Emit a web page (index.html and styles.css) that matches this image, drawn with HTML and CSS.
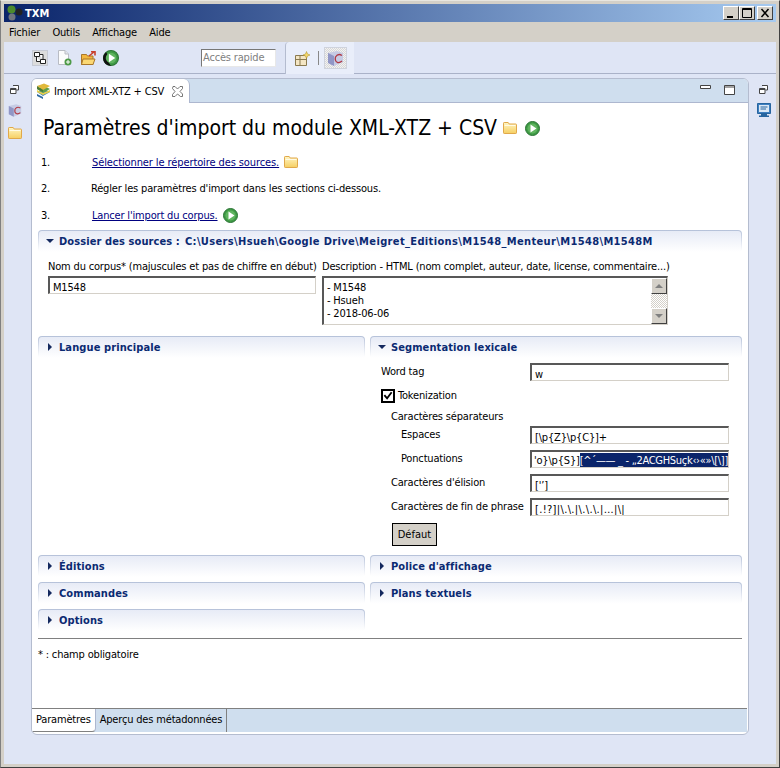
FILE: index.html
```html
<!DOCTYPE html>
<html lang="fr">
<head>
<meta charset="utf-8">
<title>TXM</title>
<link rel="stylesheet" href="styles.css">
</head>
<body>
<svg class="defs" width="0" height="0">
  <defs>
    <linearGradient id="fold" x1="0" y1="0" x2="0" y2="1"><stop offset="0" stop-color="#fff6c4"/><stop offset="1" stop-color="#f6cf62"/></linearGradient>
    <symbol id="folder" viewBox="0 0 14 12">
      <path d="M.5 2V1.2Q.5.5 1.2.5h4L6.200 2H12.800Q13.500 2 13.500 2.700V10.800Q13.500 11.500 12.800 11.500H1.200Q.5 11.500 .5 10.800Z" fill="url(#fold)" stroke="#e0a84a"/>
      <path d="M1.500 3.500H12.500" stroke="#fffbe6"/>
    </symbol>
    <symbol id="play" viewBox="0 0 15 15">
      <circle cx="7.500" cy="7.500" r="7" fill="#3f9a45" stroke="#2a7434"/>
      <circle cx="7.500" cy="7.500" r="5" fill="#5fb45f"/>
      <path d="M5.500 3.500L11.500 7.500L5.500 11.500Z" fill="#fff"/>
    </symbol>
    <symbol id="restore" viewBox="0 0 9 9">
      <path d="M3 .5H8.500V5H6.500M.5 3.500H6V8.500H.5Z M.5 4.500H6" fill="#fff" stroke="#444"/>
    </symbol>
    <symbol id="cube" viewBox="0 0 17 17">
      <path d="M1 3L10 1L16 3V12L7 16L1 13Z" fill="#c6cbe4"/>
      <path d="M1 3L7 6V16L1 13Z" fill="#9096c6"/>
      <path d="M15 5.500Q11 3 8.500 7Q7.500 11 10.500 12.500Q13 13 15 11" fill="none" stroke="#b03a45" stroke-width="1.300"/>
    </symbol>
  </defs>
</svg>
<div class="window">
  <header class="titlebar">
    <svg class="logo" width="17" height="16" viewBox="0 0 17 16"><circle cx="5.500" cy="4.500" r="4" fill="#4c8a2c"/><circle cx="13" cy="7" r="3.500" fill="#222"/><circle cx="6" cy="12" r="3.500" fill="#70757f"/></svg>
    <span class="title-text">TXM</span>
    <div class="win-buttons">
      <span class="win-btn"><svg width="14" height="12" viewBox="0 0 14 12"><path d="M3 9H9V11H3Z" fill="#000"/></svg></span>
      <span class="win-btn"><svg width="14" height="12" viewBox="0 0 14 12"><path d="M2.500 1.500H11.500V10.500H2.500Z M2.500 2.500H11.500" fill="none" stroke="#000"/></svg></span>
      <span class="win-btn win-close"><svg width="14" height="12" viewBox="0 0 14 12"><path d="M3.500 2L10.500 10M10.500 2L3.500 10" stroke="#000" stroke-width="1.500"/></svg></span>
    </div>
  </header>
  <nav class="menubar">
    <span>Fichier</span><span>Outils</span><span>Affichage</span><span>Aide</span>
  </nav>
  <div class="toolbar">
    <div class="tool-main">
      <span class="tool-pressed"><svg width="14" height="14" viewBox="0 0 14 14"><path d="M1.500 1.500H6.500V5.500H1.500ZM7.500 8.500H12.500V12.500H7.500ZM6.500 3.500H10V8.500M7.500 10.500H3.500V5.500" fill="#fff" stroke="#222"/></svg></span>
      <svg class="tool-new" width="15" height="16" viewBox="0 0 15 16"><path d="M1.500 .5H8L11.500 4V14.500H1.500Z" fill="#fcfcfc" stroke="#b9bcc4"/><path d="M8 .5V4H11.500" fill="#e4e6ec" stroke="#b9bcc4"/><circle cx="11" cy="12" r="3.500" fill="#4d9a47"/><path d="M11 10V14M9 12H13" stroke="#fff"/></svg>
      <svg class="tool-open" width="15" height="14" viewBox="0 0 15 14"><path d="M.5 3.500H5.500L6.500 5H12V13.500H.5Z" fill="#f3b73e" stroke="#a9772a"/><path d="M2 8H14L12 13.500H.5Z" fill="#fbd873" stroke="#a9772a"/><path d="M8 5L13 1M10 .8H14V4.500" fill="none" stroke="#c8402c" stroke-width="1.600"/></svg>
      <svg class="tool-run" width="16" height="16" viewBox="0 0 15 15"><use href="#play"/><path d="M3 2A7 7 0 0 0 4 14L7.500 15 5.500 12A5 5 0 0 1 4 4Z" fill="#111"/></svg>
      <div class="quick">Accès rapide</div>
    </div>
    <div class="persp">
      <svg width="15" height="15" viewBox="0 0 15 15"><path d="M.5 4.500H11.500V14.500H.5ZM.5 8.500H11.500M5 4.500V14.500" fill="#f4e6c4" stroke="#8a7a50"/><path d="M11.500 .5L12.500 3 15 4 12.500 5 11.500 7.500 10.500 5 8 4 10.500 3Z" fill="#f5d76a" stroke="#a88a20" stroke-width=".5"/></svg>
      <i class="persp-sep"></i>
      <span class="persp-on"><svg width="17" height="17"><use href="#cube"/></svg></span>
    </div>
  </div>
  <div class="workbench">
    <aside class="trim trim-left">
      <svg width="9" height="9"><use href="#restore"/></svg>
      <svg width="14" height="15"><use href="#cube"/></svg>
      <svg width="14" height="12"><use href="#folder"/></svg>
    </aside>
    <main class="editor">
      <div class="tabstrip">
        <div class="tab">
          <svg width="15" height="16" viewBox="0 0 15 16"><path d="M1 9L8 6L14 9L7 13Z" fill="#3a7fb8"/><path d="M1 11L7 14V16L1 13Z" fill="#2f6aa0"/><path d="M1 6L8 3L14 6L7 10Z" fill="#5fa04a"/><path d="M1 7V9L7 12L14 9V7L7 10Z" fill="#e8d04a"/><path d="M1 3L8 .5L14 3L7 7Z" fill="#e0b83a"/><path d="M1 3V6L7 9V7Z" fill="#4d7a34"/></svg>
          <span>Import XML-XTZ + CSV</span>
          <svg class="tab-close" width="11" height="11" viewBox="0 0 11 11"><path d="M1 .5H3L5.500 3 8 .5H10.500V2.500L8 5.500 10.500 8V10.500H8.500L5.500 8 3 10.500H.5V8.500L3 5.500 .5 2.500Z" fill="#fff" stroke="#555" stroke-width=".8"/></svg>
        </div>
        <div class="tab-ctrl">
          <svg width="11" height="5" viewBox="0 0 11 5"><path d="M.5 .5H10.500V3.500H.5Z" fill="#fff" stroke="#444"/></svg>
          <svg width="11" height="10" viewBox="0 0 11 10"><path d="M.5 .5H10.500V9.500H.5ZM.5 2H10.500" fill="#fff" stroke="#444"/></svg>
        </div>
      </div>
      <div class="form">
        <h1 class="form-title">Paramètres d'import du module XML-XTZ + CSV
          <svg class="title-icon" width="14" height="12"><use href="#folder"/></svg>
          <svg class="title-icon title-play" width="15" height="15"><use href="#play"/></svg>
        </h1>
        <ol class="steps">
          <li><span class="num">1.</span><a class="link link-wide">Sélectionner le répertoire des sources.</a><svg width="14" height="12"><use href="#folder"/></svg></li>
          <li><span class="num">2.</span><span class="plain">Régler les paramètres d'import dans les sections ci-dessous.</span></li>
          <li><span class="num">3.</span><a class="link">Lancer l'import du corpus.</a><svg width="15" height="15"><use href="#play"/></svg></li>
        </ol>
        <section class="sec sec-full">
          <div class="sec-head"><div class="sec-in"><i class="tw-down"></i>Dossier des sources :<span class="path">C:\Users\Hsueh\Google Drive\Meigret_Editions\M1548_Menteur\M1548\M1548M</span></div></div>
          <div class="source-grid">
            <div>
              <label class="lab">Nom du corpus* (majuscules et pas de chiffre en début)</label>
              <div class="field">M1548</div>
            </div>
            <div>
              <label class="lab">Description - HTML (nom complet, auteur, date, license, commentaire...)</label>
              <div class="area">
                <div class="area-text">- M1548<br>- Hsueh<br>- 2018-06-06</div>
                <div class="scroll">
                  <span class="sb-btn"><i class="sb-up"></i></span>
                  <span class="sb-track"></span>
                  <span class="sb-btn"><i class="sb-down"></i></span>
                </div>
              </div>
            </div>
          </div>
        </section>
        <div class="cols">
          <div class="col">
            <section class="sec lang"><div class="sec-head"><div class="sec-in"><i class="tw-right"></i>Langue principale</div></div></section>
            <section class="sec sp"><div class="sec-head"><div class="sec-in"><i class="tw-right"></i>Éditions</div></div></section>
            <section class="sec sp"><div class="sec-head"><div class="sec-in"><i class="tw-right"></i>Commandes</div></div></section>
            <section class="sec sp"><div class="sec-head"><div class="sec-in"><i class="tw-right"></i>Options</div></div></section>
          </div>
          <div class="col">
            <section class="sec">
              <div class="sec-head"><div class="sec-in"><i class="tw-down"></i>Segmentation lexicale</div></div>
              <div class="seg">
                <div class="row"><span class="row-l">Word tag</span><div class="field">w</div></div>
                <div class="check-row"><span class="check"><svg width="11" height="11" viewBox="0 0 11 11"><path d="M1.500 5L4.500 8.500L9.500 2" fill="none" stroke="#000" stroke-width="2"/></svg></span>Tokenization</div>
                <div class="seg-h">Caractères séparateurs</div>
                <div class="row r-esp"><span class="row-l l1">Espaces</span><div class="field">[\p{Z}\p{C}]+</div></div>
                <div class="row r-n"><span class="row-l l1">Ponctuations</span><div class="field field-clip"><span>'o}\p{S}]<b class="sel">[^´—— _ - „2ACGHSuçk‹›«»\[\]]</b></span></div></div>
                <div class="row r-n"><span class="row-l l0b">Caractères d'élision</span><div class="field">['’]</div></div>
                <div class="row r-n"><span class="row-l l0b">Caractères de fin de phrase</span><div class="field field-wide">[.!?]|\.\.|\.\.\.|…|\|</div></div>
                <button class="btn" type="button">Défaut</button>
              </div>
            </section>
            <section class="sec sp"><div class="sec-head"><div class="sec-in"><i class="tw-right"></i>Police d'affichage</div></div></section>
            <section class="sec sp"><div class="sec-head"><div class="sec-in"><i class="tw-right"></i>Plans textuels</div></div></section>
          </div>
        </div>
        <hr class="rule">
        <p class="note">* : champ obligatoire</p>
      </div>
      <div class="bottom-tabs">
        <span class="btab btab-on">Paramètres</span><span class="btab">Aperçu des métadonnées</span>
      </div>
    </main>
    <aside class="trim trim-right">
      <svg width="9" height="9"><use href="#restore"/></svg>
      <svg width="14" height="15" viewBox="0 0 14 15"><path d="M.5 .5H13.500V10.500H.5Z" fill="#3d7fc0" stroke="#27659f"/><path d="M2 2H12V9H2Z" fill="#dbe8f5"/><path d="M3.500 4H10.500M3.500 6H9" stroke="#27659f"/><path d="M4 11H10V12.500H12V14H2V12.500H4Z" fill="#27659f"/></svg>
    </aside>
  </div>
</div>
</body>
</html>
```

FILE: styles.css
```css
* { box-sizing: border-box; }
html, body { margin: 0; padding: 0; background: #d4d0c8; }
body { width: 780px; height: 768px; overflow: hidden; font: 11px "DejaVu Sans Condensed", "DejaVu Sans", sans-serif; letter-spacing: -0.17px; color: #000; }
.defs { position: absolute; }
.window { width: 780px; height: 768px; display: flex; flex-direction: column; border: 1px solid #404040; border-top-color: #e8e6e0; border-left-color: #808080; padding: 3px; background: #d4d0c8; }
.titlebar { height: 18px; flex: none; display: flex; align-items: center; padding: 0 3px 0 2px; background: linear-gradient(90deg, #0a246a, #a6caf0); color: #fff; font-weight: bold; letter-spacing: 0; }
.title-text { margin-left: 2px; font-size: 11px; }
.win-buttons { margin-left: auto; display: flex; }
.win-btn { width: 16px; height: 14px; background: #d4d0c8; border: 1px solid; border-color: #fff #404040 #404040 #fff; display: flex; align-items: center; justify-content: center; }
.win-close { margin-left: 2px; }
.menubar { height: 20px; flex: none; display: flex; gap: 12.3px; align-items: center; padding-left: 5px; background: #d4d0c8; }
.toolbar { height: 32px; flex: none; display: flex; background: #dfe5f5; border-bottom: 1px solid #aab2c8; }
.tool-main { width: 281px; display: flex; align-items: center; padding-left: 28px; }
.tool-pressed { width: 16px; height: 16px; background: #dcdcdc; border: 1px solid #c6cad4; display: flex; align-items: center; justify-content: center; }
.tool-new { margin-left: 9px; }
.tool-open { margin-left: 9px; }
.tool-run { margin-left: 7px; }
.quick { width: 75px; height: 18px; margin-left: 82px; background: #fff; border: 1px solid; border-color: #777 #e8e8e8 #e8e8e8 #777; color: #808080; line-height: 16px; padding-left: 1px; }
.persp { width: 69px; height: 32px; display: flex; align-items: center; gap: 5px; padding-left: 9px; background: #e9eefa; border-left: 1px solid #b4bccf; border-top-left-radius: 4px; margin-bottom: -1px; }
.persp-sep { width: 1px; height: 14px; background: #888; margin-left: 3px; }
.persp-on { width: 23px; height: 22px; background: repeating-conic-gradient(#d8d8d8 0 25%, #f2f2f2 0 50%) 0 0 / 2px 2px; border: 1px solid #cfd3dd; display: flex; align-items: center; justify-content: center; }
.workbench { flex: 1; min-height: 0; display: flex; background: #dfe5f5; padding-top: 4px; }
.trim { display: flex; flex-direction: column; align-items: center; gap: 9px; padding-top: 7px; }
.trim-left { width: 27px; padding-right: 5px; }
.trim-right { width: 27px; padding-left: 2px; }
.editor { width: 719px; height: 657px; display: flex; flex-direction: column; background: #fff; border: 1px solid #b4bccf; border-radius: 6px; overflow: hidden; }
.tabstrip { height: 24px; flex: none; display: flex; justify-content: space-between; background: #cfdeee; border-bottom: 1px solid #adb7cf; }
.tab { width: 158px; height: 24px; display: flex; align-items: center; gap: 3px; padding-left: 4px; background: #fff; border-right: 1px solid #adb7cf; border-top-right-radius: 6px; }
.tab-close { margin-left: 5px; }
.tab-ctrl { display: flex; gap: 13px; align-items: flex-start; padding: 6px 13px 0 0; }
.form { flex: 1; min-height: 0; padding: 0 6px; }
.form-title { margin: 0; height: 46px; padding: 4px 0 0 5px; font-size: 21px; line-height: 24px; font-weight: normal; letter-spacing: 0; display: flex; align-items: center; white-space: nowrap; }
.title-icon { margin-left: 6px; }
.title-play { margin-left: 8px; }
.steps { list-style: none; margin: 0; padding: 0 0 0 3px; }
.steps li { height: 26.5px; display: flex; align-items: center; gap: 5px; }
.num { width: 46px; }
.link { color: #000080; text-decoration: underline; }
.link-wide { letter-spacing: -0.1px; }
.plain { margin-left: -1px; }
.sec-full { margin-top: 1px; }
.sec-head { padding: 1px 1px 0; background: linear-gradient(#b5c1d9, #fff 95%); border-radius: 4px 4px 0 0; }
.sec-in { height: 21px; padding-left: 7px; display: flex; align-items: center; background: linear-gradient(#e7ebf6, #fff); border-radius: 3px 3px 0 0; color: #0b2a72; font-weight: bold; letter-spacing: 0.1px; white-space: nowrap; }
.path { margin-left: 5px; letter-spacing: 0.36px; }
.tw-down { width: 0; height: 0; margin-right: 5px; border: 4px solid transparent; border-top: 4px solid #14295e; border-bottom: 0; }
.tw-right { width: 0; height: 0; margin: 0 7px 0 2px; border: 4px solid transparent; border-left: 4px solid #14295e; border-right: 0; }
.source-grid { display: grid; grid-template-columns: 268px 346px; gap: 6px; padding: 7px 0 0 10px; }
.lab { display: block; height: 17px; line-height: 15px; white-space: nowrap; }
.field { flex: none; height: 18px; padding: 2px 0 0 3px; line-height: 15px; background: #fff; border: solid; border-color: #585858 #d4d0c8 #d4d0c8 #585858; border-width: 2px 1px 1px 2px; white-space: nowrap; overflow: hidden; }
.field-wide { letter-spacing: 0.35px; }
.area { height: 49px; display: flex; background: #fff; border: solid; border-color: #585858 #d4d0c8 #d4d0c8 #585858; border-width: 2px 1px 1px 2px; }
.area-text { flex: 1; padding: 3px 0 0 3px; line-height: 13px; }
.scroll { width: 16px; display: flex; flex-direction: column; }
.sb-btn { height: 16px; flex: none; background: #d4d0c8; border: 1px solid; border-color: #fff #404040 #404040 #fff; display: flex; align-items: center; justify-content: center; }
.sb-track { flex: 1; background: repeating-conic-gradient(#d4d0c8 0 25%, #fff 0 50%) 0 0 / 2px 2px; }
.sb-up { border: 4px solid transparent; border-bottom: 4px solid #808080; border-top: 0; }
.sb-down { border: 4px solid transparent; border-top: 4px solid #808080; border-bottom: 0; }
.cols { display: grid; grid-template-columns: 327px 372px; gap: 5px; margin-top: 11px; }
.col { min-width: 0; }
.sp { margin-top: 5px; }
.lang { height: 214px; }
.seg { padding: 5px 13px 5px 11px; }
.row { display: flex; justify-content: space-between; height: 18px; }
.row .field { width: 199px; }
.row-l { line-height: 14px; margin-top: 2px; }
.l1 { padding-left: 20px; }
.l0b { padding-left: 10px; }
.check-row { display: flex; align-items: center; gap: 3px; height: 16px; margin-top: 7px; }
.check { width: 14px; height: 14px; background: #fff; border: 2px solid #000; display: flex; align-items: center; justify-content: center; }
.seg-h { padding-left: 10px; line-height: 14px; margin-top: 6px; }
.r-esp { margin-top: 2px; }
.r-n { margin-top: 6px; }
.field-clip { padding: 1px 0 0; }
.field-clip span { float: right; }
.sel { font-weight: normal; letter-spacing: -0.3px; background: #0a246a; color: #fff; padding: 1px 0; }
.btn { display: block; margin: 7px 0 -1px 11px; width: 45px; height: 23px; padding: 0; font: inherit; background: #d4d0c8; border: 1px solid #000; color: #000; }
.rule { margin: 7px 0 0; border: 0; border-top: 1px solid #808080; }
.note { margin: 9px 0 0; line-height: 13px; }
.bottom-tabs { height: 24px; flex: none; display: flex; background: #cfdeee; border-top: 1px solid #808080; margin: 0 1px 2px 0; }
.btab { padding: 0 4px; line-height: 22px; border-right: 1px solid #808080; }
.btab-on { background: #fff; border-right: 1px solid #adb7cf; border-bottom: 1px solid #808080; border-bottom-right-radius: 4px; }
```
